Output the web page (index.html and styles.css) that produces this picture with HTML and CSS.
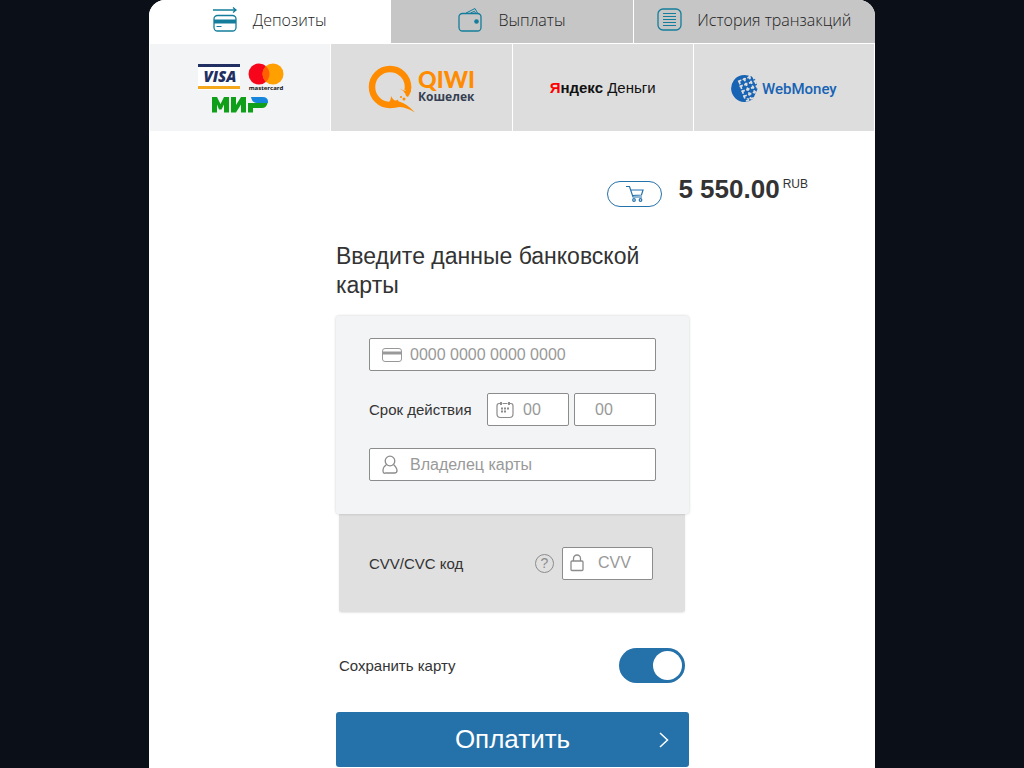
FILE: index.html
```html
<!DOCTYPE html>
<html lang="ru">
<head>
  <meta charset="UTF-8">
  <meta name="viewport" content="width=device-width, initial-scale=1.0">
  <title>Депозиты</title>
  <link rel="stylesheet" href="styles.css">
</head>
<body>

  <div class="cashier">

    <!-- Tabs -->
    <nav class="tabs">
      <a href="#deposit" class="tab active">
        <svg class="tab-icon" width="25" height="25" viewBox="0 0 25 25" fill="none" stroke="#137d9b">
          <path d="M0 3h22M20 0.5l3 2.500-3 2.500" stroke-width="1.3"/>
          <rect x="1" y="8.500" width="22" height="15.5" rx="3.5" stroke-width="1.3"/>
          <path d="M1 14.500h22" stroke-width="4"/>
          <path d="M3.500 19.500h5" stroke-width="1.2"/>
        </svg>
        <span>Депозиты</span>
      </a>
      <a href="#withdraw" class="tab">
        <svg class="tab-icon" width="25" height="25" viewBox="0 0 25 25" fill="none" stroke="#137d9b" stroke-width="1.3">
          <rect x="1" y="6.500" width="22" height="17.500" rx="3.500"/>
          <path d="M8 6L17 1.500l2.500 4.500M12.500 6l4-1.700 1 1.700" stroke-width="1"/>
          <circle cx="18.500" cy="14.500" r="2.300" fill="#137d9b" stroke="none"/>
        </svg>
        <span>Выплаты</span>
      </a>
      <a href="#history" class="tab">
        <svg class="tab-icon" width="25" height="25" viewBox="0 0 25 25" fill="none" stroke="#137d9b" stroke-width="1.3">
          <rect x="1" y="2" width="23" height="21" rx="5"/>
          <path d="M6 6.500h13M6 9.500h13M6 12.500h13M6 15.500h13M6 18.500h13" stroke-width="1.200"/>
        </svg>
        <span>История транзакций</span>
      </a>
    </nav>

    <!-- Payment methods -->
    <div class="methods">
      <button type="button" class="method active">
        <svg width="88" height="52" viewBox="0 0 88 52">
          <rect x="2" y="2" width="42" height="26" fill="#fff"/>
          <rect x="2" y="2" width="42" height="3" fill="#222f63"/>
          <rect x="2" y="24" width="42" height="3" fill="#f5a81c"/>
          <text x="24" y="20" class="logo-visa">VISA</text>
          <circle cx="63" cy="12" r="10.500" fill="#f7061b"/>
          <circle cx="77" cy="12" r="10.500" fill="#ff9f00"/>
          <path d="M70 4.200a10.500 10.500 0 0 1 0 15.600a10.500 10.500 0 0 1 0-15.600z" fill="#ff5f00"/>
          <text x="70" y="28" class="logo-mastercard">mastercard</text>
          <g fill="#0f9f18">
            <path d="M16 35h5l3.500 7 3.500-7h5v15.500h-5v-8l-2.500 5h-2.500L21 42.500v8h-5z"/>
            <path d="M35 35h5v8l5-8h5v15.500h-5v-8l-5 8h-5z"/>
            <path d="M52 41h19.500q-1 5-5.500 5h-9v4.500h-5z"/>
          </g>
          <path d="M55 35h11.500q6 0 5.500 6H61q-5 0-6-6z" fill="#1685dc"/>
        </svg>
      </button>
      <button type="button" class="method">
        <svg width="108" height="50" viewBox="0 0 108 50">
          <circle cx="23" cy="24" r="18" fill="none" stroke="#ff8c00" stroke-width="6.500"/>
          <path d="M30 34l7-7 9 3-5 11-9-1z" fill="#ddd"/>
          <path d="M32 25q5 3 7 3l1-5 4-2q1 8-3 13l-2-1q-1-5-7-8z" fill="#ff8c00"/>
          <path d="M24 33q2 5 8 5.500 8 2 16 11-8-5-15-5.500l-9 1-3-5q3-2 3-7z" fill="#ff8c00"/>
          <circle cx="37" cy="36" r="1.500" fill="#ff8c00"/>
          <circle cx="34" cy="34" r="1.100" fill="#ff8c00"/>
          <text x="51" y="25" class="logo-qiwi">QIWI</text>
          <text x="51" y="38" class="logo-wallet">Кошелек</text>
        </svg>
      </button>
      <button type="button" class="method">
        <span class="logo-yandex"><b><i>Я</i>ндекс</b> Деньги</span>
      </button>
      <button type="button" class="method">
        <svg width="108" height="30" viewBox="0 0 108 30">
          <path d="M21 3.500A13.500 13.500 0 1 0 23 26L17 26 8 8z" fill="#1763b4"/>
          <path d="M8 8l13-5 4 3 3 9-5 11-7-1z" fill="#1763b4"/>
          <g fill="none" stroke="#ddd">
            <path d="M8 8.500l16-6M9.500 13.500l17-6M11.500 18.500l17-6M13.500 23.500l15-6M16 28l12-5" stroke-width="1.700" stroke-dasharray="3.500 1.500"/>
            <path d="M9 8l6 18M14 5l7 21M19 3l7 20M23 3l6 16" stroke-width="1.700" stroke-dasharray="3.500 1.500"/>
          </g>
          <text x="32" y="21" class="logo-webmoney">WebMoney</text>
        </svg>
      </button>
    </div>

    <!-- Sum to pay -->
    <div class="total">
      <a href="#cart" class="cart" aria-label="Корзина">
        <svg width="20" height="18" viewBox="0 0 20 18" fill="none" stroke="#2571aa" stroke-width="1.200">
          <path d="M1 1.500h3.500L8 12h9M5.500 5H18l-1.500 5-9 .5"/>
          <circle cx="9" cy="15" r="1.300"/>
          <circle cx="15.500" cy="15" r="1.300"/>
        </svg>
      </a>
      <strong class="amount">5 550.00</strong>
      <span class="currency">RUB</span>
    </div>

    <form class="pay-form">
      <h1>Введите данные банковской карты</h1>

      <div class="card-front">
        <label class="field">
          <svg class="field-icon" width="20" height="16" viewBox="0 0 20 16" fill="none" stroke="#999">
            <rect x=".5" y="1.500" width="19" height="13" rx="2.500"/>
            <path d="M1 6h18" stroke-width="3"/>
          </svg>
          <input type="text" placeholder="0000 0000 0000 0000" aria-label="Номер карты">
        </label>

        <div class="expiry">
          <label for="month">Срок действия</label>
          <div class="field month">
            <svg class="field-icon" width="18" height="18" viewBox="0 0 18 18" fill="none" stroke="#8c8c8c" stroke-width="1.200">
              <path d="M4 2.500H3q-2 0-2 2.500v8q0 3.500 3.500 3.500h9q3.500 0 3.500-3.500V5q0-2.500-2-2.500h-1M6.500 2.500h5"/>
              <path d="M5 1v3M13 1v3" stroke-width="2"/>
              <path d="M5 7.500h9M5 10.500h6" stroke-width="2" stroke-dasharray="2 1"/>
            </svg>
            <input type="text" id="month" placeholder="00">
          </div>
          <div class="field year">
            <input type="text" placeholder="00" aria-label="Год">
          </div>
        </div>

        <label class="field">
          <svg class="field-icon person" width="16" height="20" viewBox="0 0 16 20" fill="none" stroke="#8c8c8c" stroke-width="1.300">
            <circle cx="8" cy="6" r="4.800"/>
            <path d="M4.500 9.500Q1 12 1 15.500T3.500 18h9q2.500 0 2.500-2.500t-3.500-6"/>
          </svg>
          <input type="text" placeholder="Владелец карты" aria-label="Владелец карты">
        </label>
      </div>

      <div class="card-back">
        <label for="cvv">CVV/CVC код</label>
        <button type="button" class="help" aria-label="Что такое CVV">?</button>
        <div class="field cvv">
          <svg class="field-icon" width="14" height="18" viewBox="0 0 14 18" fill="none" stroke="#8c8c8c" stroke-width="1.300">
            <rect x="1" y="7" width="12" height="9.500" rx="1"/>
            <path d="M3.500 7V4.500a3.500 3.500 0 0 1 7 0V7"/>
          </svg>
          <input type="text" id="cvv" placeholder="CVV">
        </div>
      </div>

      <div class="save">
        <label for="saveCard">Сохранить карту</label>
        <input type="checkbox" id="saveCard" class="switch" checked>
      </div>

      <button type="submit" class="submit-btn">
        <span>Оплатить</span>
        <svg width="10" height="16" viewBox="0 0 10 16" fill="none" stroke="#fff" stroke-width="1.500">
          <path d="M1 1l7.500 7L1 15"/>
        </svg>
      </button>
    </form>

  </div>

</body>
</html>
```

FILE: styles.css
```css
* {
  box-sizing: border-box;
}

body {
  margin: 0;
  font-family: "Liberation Sans", Arial, sans-serif;
  font-size: 15px;
  color: #333;
  background-color: #0a0f18;
}

svg {
  display: block;
  flex: none;
}

.cashier {
  max-width: 726px;
  min-height: 100vh;
  margin: 0 auto;
  background-color: #fff;
  border-radius: 16px 16px 0 0;
  overflow: hidden;
}

/* Tabs */
.tabs {
  display: grid;
  grid-template-columns: repeat(3, 1fr);
  gap: 1px;
}

.tab {
  display: flex;
  align-items: center;
  justify-content: center;
  gap: 15px;
  height: 43px;
  padding-bottom: 4px;
  background-color: #c6c6c6;
  color: #222;
  font-family: "Open Sans", sans-serif;
  font-size: 16px;
  font-weight: 300;
  text-decoration: none;
}

.tab.active {
  background-color: #fff;
}

/* Payment methods */
.methods {
  display: grid;
  grid-template-columns: repeat(4, 1fr);
  gap: 1px;
  padding: 1px 1px 0;
}

.method {
  display: flex;
  align-items: center;
  justify-content: center;
  height: 87px;
  padding: 0;
  border: none;
  background-color: #ddd;
  cursor: pointer;
}

.method.active {
  background-color: #f3f4f6;
}

.logo-visa {
  font: italic 800 15px "Open Sans", sans-serif;
  fill: #222f63;
  text-anchor: middle;
}

.logo-mastercard {
  font: bold 6px "Open Sans", sans-serif;
  fill: #111;
  text-anchor: middle;
}

.logo-qiwi {
  font: 900 23px Lato, sans-serif;
  fill: #ff8c00;
}

.logo-wallet {
  font: bold 12px "Open Sans", sans-serif;
  fill: #354052;
}

.logo-yandex {
  font-family: "Liberation Sans", Arial, sans-serif;
  font-size: 15px;
  color: #111;
}

.logo-yandex i {
  font-style: normal;
  color: #f00;
}

.logo-webmoney {
  font: 500 15px Roboto, sans-serif;
  fill: #1763b4;
}

/* Sum to pay */
.total {
  display: flex;
  justify-content: flex-end;
  padding: 41px 67px 0 0;
}

.cart {
  display: flex;
  align-items: center;
  justify-content: center;
  width: 55px;
  height: 26px;
  margin: 9px 16px 0 0;
  border: 1px solid #2571aa;
  border-radius: 13px;
}

.amount {
  font-size: 26px;
  line-height: 34px;
}

.currency {
  margin: 5px 0 0 3px;
  font-size: 12px;
  line-height: 14px;
}

/* Form */
.pay-form {
  width: 354px;
  margin: 0 auto;
  padding-left: 1px;
}

h1 {
  margin: 35px 0 16px;
  font-size: 23px;
  font-weight: normal;
  line-height: 29px;
}

.card-front {
  position: relative;
  display: grid;
  gap: 22px;
  padding: 22px 33px 33px;
  background-color: #f3f4f6;
  border-radius: 3px;
  box-shadow: 0 0 3px rgba(0, 0, 0, 0.2);
}

.field {
  display: flex;
  align-items: center;
  height: 33px;
  padding-left: 12px;
  background-color: #fff;
  border: 1px solid #8c8c8c;
  border-radius: 2px;
}

.field input {
  flex: 1;
  width: 100%;
  min-width: 0;
  padding: 0 0 0 8px;
  border: none;
  outline: none;
  background: none;
  font-family: inherit;
  font-size: 16px;
  color: #333;
}

.field input::placeholder {
  color: #999;
  opacity: 1;
}

.person {
  margin-right: 4px;
}

.expiry {
  display: flex;
  align-items: center;
  gap: 5px;
}

.expiry label {
  flex: 1;
}

.month,
.year {
  width: 82px;
  padding-left: 8px;
}

.month input {
  padding-left: 9px;
}

.year {
  padding-left: 12px;
}

.card-back {
  display: flex;
  align-items: center;
  gap: 8px;
  height: 98px;
  margin: 0 4px 0 3px;
  padding: 0 32px 0 30px;
  background-color: #e0e0e0;
  border-radius: 0 0 3px 3px;
  box-shadow: 0 1px 2px rgba(0, 0, 0, 0.1);
}

.card-back label {
  flex: 1;
}

.help {
  width: 19px;
  height: 19px;
  padding: 0;
  border: 1px solid #8c8c8c;
  border-radius: 50%;
  background: none;
  font-family: inherit;
  font-size: 14px;
  line-height: 17px;
  color: #8c8c8c;
}

.cvv {
  width: 91px;
  padding-left: 7px;
}

.cvv input {
  padding-left: 14px;
}

.save {
  display: flex;
  align-items: center;
  justify-content: space-between;
  margin: 36px 4px 29px 3px;
}

.switch {
  appearance: none;
  display: flex;
  width: 66px;
  height: 35px;
  margin: 0;
  padding: 3px;
  border-radius: 18px;
  background-color: #2571aa;
  cursor: pointer;
}

.switch::before {
  content: "";
  width: 29px;
  height: 29px;
  border-radius: 50%;
  background-color: #fff;
}

.switch:checked {
  justify-content: flex-end;
}

.submit-btn {
  display: flex;
  align-items: center;
  width: 100%;
  height: 55px;
  padding: 0 20px 0 30px;
  border: none;
  border-radius: 3px;
  background-color: #2571aa;
  color: #fff;
  font-family: inherit;
  font-size: 26px;
  cursor: pointer;
}

.submit-btn span {
  flex: 1;
}
```
